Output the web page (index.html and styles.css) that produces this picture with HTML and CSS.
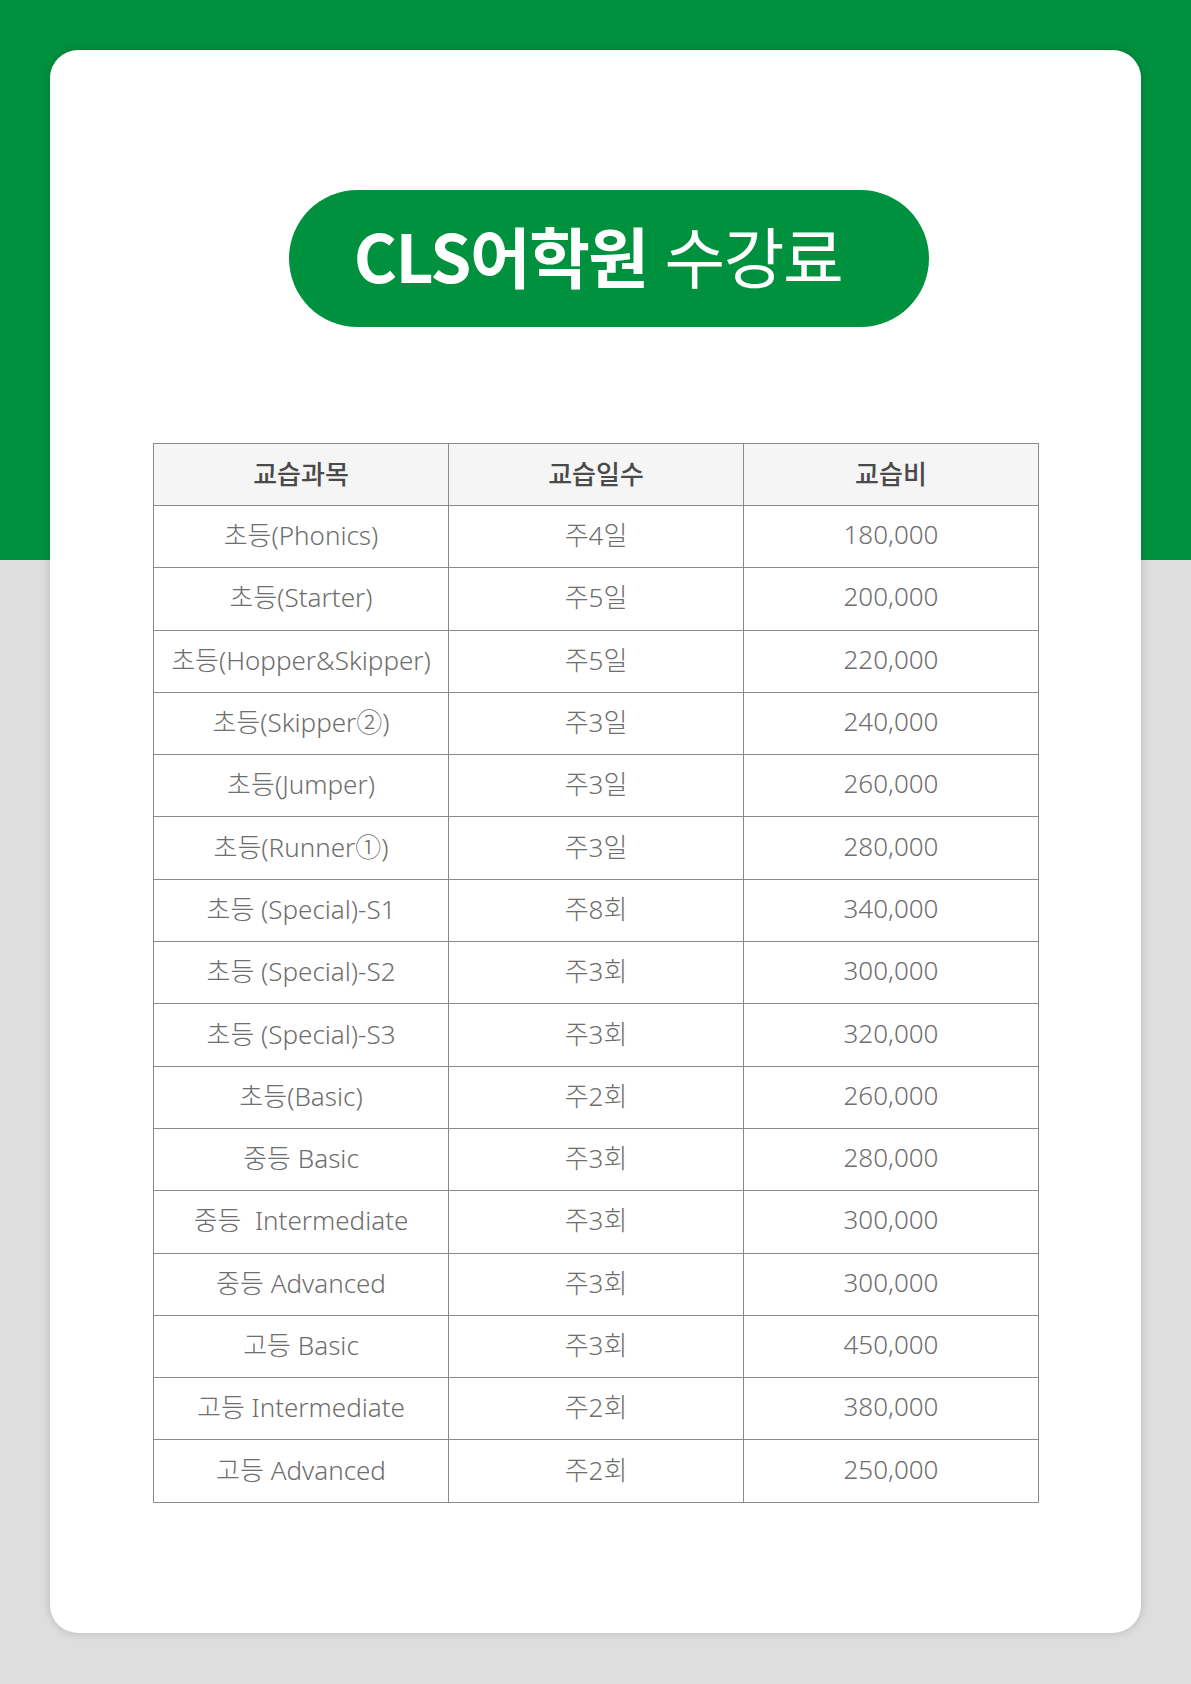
FILE: index.html
```html
<!DOCTYPE html>
<html lang="ko">
<head>
<meta charset="utf-8">
<title>CLS어학원 수강료</title>
<link rel="stylesheet" href="styles.css">
</head>
<body>
<div class="page">
  <div class="card">
    <div class="title-pill">
      <span class="title-text"><b class="title-bold">CLS어학원</b> <span class="title-light">수강료</span></span>
    </div>
    <table class="fee-table">
      <thead>
        <tr><th>교습과목</th><th>교습일수</th><th>교습비</th></tr>
      </thead>
      <tbody>
        <tr><td>초등(Phonics)</td><td>주4일</td><td>180,000</td></tr>
        <tr><td>초등(Starter)</td><td>주5일</td><td>200,000</td></tr>
        <tr><td>초등(Hopper&amp;Skipper)</td><td>주5일</td><td>220,000</td></tr>
        <tr><td>초등(Skipper②)</td><td>주3일</td><td>240,000</td></tr>
        <tr><td>초등(Jumper)</td><td>주3일</td><td>260,000</td></tr>
        <tr><td>초등(Runner①)</td><td>주3일</td><td>280,000</td></tr>
        <tr><td>초등 (Special)-S1</td><td>주8회</td><td>340,000</td></tr>
        <tr><td>초등 (Special)-S2</td><td>주3회</td><td>300,000</td></tr>
        <tr><td>초등 (Special)-S3</td><td>주3회</td><td>320,000</td></tr>
        <tr><td>초등(Basic)</td><td>주2회</td><td>260,000</td></tr>
        <tr><td>중등 Basic</td><td>주3회</td><td>280,000</td></tr>
        <tr><td>중등&nbsp; Intermediate</td><td>주3회</td><td>300,000</td></tr>
        <tr><td>중등 Advanced</td><td>주3회</td><td>300,000</td></tr>
        <tr><td>고등 Basic</td><td>주3회</td><td>450,000</td></tr>
        <tr><td>고등 Intermediate</td><td>주2회</td><td>380,000</td></tr>
        <tr><td>고등 Advanced</td><td>주2회</td><td>250,000</td></tr>
      </tbody>
    </table>
  </div>
</div>
</body>
</html>
```

FILE: styles.css
```css
* { box-sizing: border-box; }
html, body { margin: 0; padding: 0; }
body {
  width: 1191px;
  height: 1684px;
  background: linear-gradient(to bottom, #00913e 0, #00913e 560px, #dedede 560px, #dedede 100%);
  font-family: "Noto Sans", "Noto Sans CJK KR", sans-serif;
  overflow: hidden;
}
.page {
  padding: 50px 50px 0 50px;
}
.card {
  width: 1091px;
  height: 1583px;
  background: #fff;
  border-radius: 28px;
  box-shadow: 0 0 10px rgba(0, 0, 0, 0.18);
  padding: 140px 0 0 103px;
}
.title-pill {
  margin-left: 136px;
  width: 640px;
  height: 137px;
  border-radius: 69px;
  background: #00913e;
  color: #fff;
  display: flex;
  align-items: center;
  justify-content: center;
  padding: 0 22px 9px 0;
  font-family: "Noto Sans CJK KR", sans-serif;
}
.title-text {
  font-size: 66px;
  letter-spacing: -1.5px;
  line-height: 1;
  white-space: nowrap;
}
.title-bold { font-weight: 700; }
.title-light { font-weight: 400; }
.fee-table {
  margin-top: 116px;
  width: 886px;
  border-collapse: collapse;
  table-layout: fixed;
}
.fee-table th, .fee-table td {
  border: 1px solid #8a8a8a;
  text-align: center;
  padding: 0 0 5px 0;
  font-size: 26px;
  white-space: nowrap;
}
.fee-table th {
  height: 62px;
  background: #f5f5f5;
  color: #4a4a4a;
  font-weight: 500;
  font-family: "Noto Sans CJK KR", sans-serif;
}
.fee-table td {
  height: 62.3px;
  color: #6e6e6e;
  font-weight: 300;
}
```
